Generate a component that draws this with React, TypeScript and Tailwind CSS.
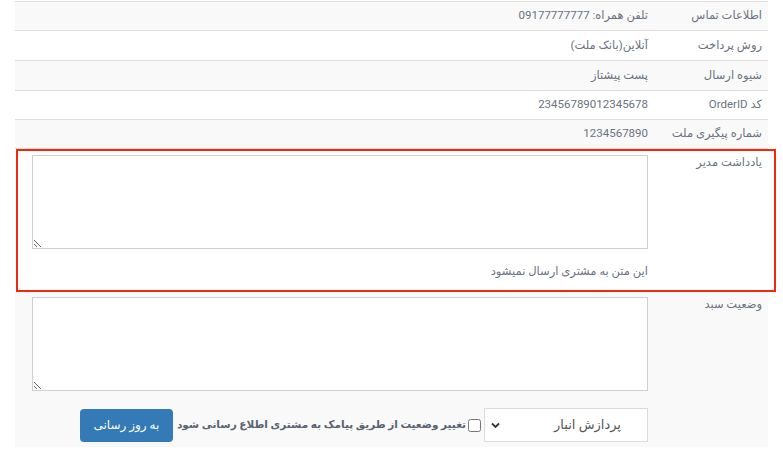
import { useState } from "react"

const rows = [
  { label: "اطلاعات تماس", value: "تلفن همراه: 09177777777", grey: true, h: "h-[29px]" },
  { label: "روش پرداخت", value: "آنلاین(بانک ملت)", grey: false, h: "h-[30px]" },
  { label: "شیوه ارسال", value: "پست پیشتاز", grey: true, h: "h-[30px]" },
  { label: "کد OrderID", value: "23456789012345678", grey: false, h: "h-[29px]" },
  { label: "شماره پیگیری ملت", value: "1234567890", grey: true, h: "h-[29px]" },
]

export default function App() {
  const [status, setStatus] = useState("warehouse")
  const [notify, setNotify] = useState(false)
  const labelCell = "w-[112px] shrink-0 pr-[6px]"
  const textareaStyle = "block w-[616px] h-[94px] bg-white border border-[#cfcfcf] outline-none text-[12px] p-1"

  return (
    <div
      dir="rtl"
      className="w-[783px] h-[461px] bg-white text-[11.5px] text-[#6b7280] px-[15px] pt-px overflow-hidden"
      style={{ fontFamily: "Roboto, 'DejaVu Sans', sans-serif" }}
    >
      <div className="border-t border-[#dddddd]">
        {rows.map((row) => (
          <div
            key={row.label}
            className={`flex items-center ${row.h} border-b border-[#dddddd] ${row.grey ? "bg-[#f9f9f9]" : "bg-white"}`}
          >
            <div className={labelCell}>{row.label}</div>
            <div className="flex-1 pr-[8px]">{row.value}</div>
          </div>
        ))}

        {/* admin note, highlighted */}
        <div className="relative flex h-[143px] bg-white pt-[6px]">
          <div className={`${labelCell} leading-[14px]`}>یادداشت مدیر</div>
          <div className="flex-1 pr-[8px]">
            <textarea className={textareaStyle} />
            <div className="mt-[14px] w-[616px]">این متن به مشتری ارسال نمیشود</div>
          </div>
          <div className="absolute top-0 bottom-0 left-px right-[-8px] border-2 border-[#f2290c] pointer-events-none" />
        </div>

        {/* cart status */}
        <div className="flex h-[155px] bg-[#f9f9f9] pt-[5px]">
          <div className={`${labelCell} leading-[14px]`}>وضعیت سبد</div>
          <div className="flex-1 pr-[8px]">
            <textarea className={textareaStyle} />
            <div className="flex items-center mt-[17px] h-[34px]">
              <div className="relative w-[164px] h-[34px] shrink-0">
                <select
                  value={status}
                  onChange={(e) => setStatus(e.target.value)}
                  className="appearance-none w-full h-full bg-white border border-[#dcdcdc] text-[13px] text-[#555] pr-[26px] outline-none"
                >
                  <option value="warehouse">پردازش انبار</option>
                  <option value="sent">ارسال شده</option>
                </select>
                <svg className="absolute left-[7px] top-[14px] w-[9px] h-[7px] pointer-events-none" viewBox="0 0 9 7">
                  <path d="M1 1.5 L4.5 5 L8 1.5" fill="none" stroke="#333" strokeWidth="1.8" />
                </svg>
              </div>
              <label className="flex items-center mr-[3px] font-bold text-[10.5px] text-[#5a6270]">
                <input
                  type="checkbox"
                  checked={notify}
                  onChange={() => setNotify(!notify)}
                  className="w-[13px] h-[13px] m-0 ml-[2px]"
                />
                تغییر وضعیت از طریق پیامک به مشتری اطلاع رسانی شود
              </label>
              <button className="mr-[4px] w-[93px] h-[33px] rounded-[4px] bg-[#337ab7] text-white text-[12px]">
                به روز رسانی
              </button>
            </div>
          </div>
        </div>
      </div>
    </div>
  )
}
